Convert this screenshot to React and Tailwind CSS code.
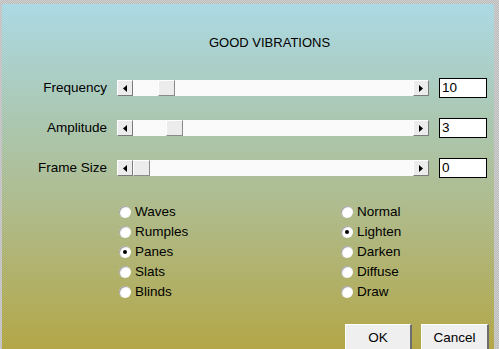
import React from "react";

const F = { fontFamily: '"Liberation Sans", Arial, sans-serif' };

function Arrow({ dir }) {
  return (
    <div className="w-[16px] h-[16px] shrink-0 bg-[#ececec] border-t border-l border-t-white border-l-white border-r border-b border-r-[#7a7a7a] border-b-[#7a7a7a] flex items-center justify-center">
      <svg width="4" height="7" viewBox="0 0 4 7">
        {dir === "left" ? (
          <polygon points="4,0 4,7 0,3.5" fill="#000" />
        ) : (
          <polygon points="0,0 0,7 4,3.5" fill="#000" />
        )}
      </svg>
    </div>
  );
}

function Scroll({ offset }) {
  return (
    <div className="flex w-[312px] h-[16px]">
      <Arrow dir="left" />
      <div className="flex-1 h-[16px] bg-[#fafafa] flex">
        <div
          className="h-[16px] w-[17px] bg-[#ececec] border-t border-l border-t-white border-l-white border-r border-b border-r-[#8a8a8a] border-b-[#8a8a8a]"
          style={{ marginLeft: offset }}
        />
      </div>
      <Arrow dir="right" />
    </div>
  );
}

function Row({ label, offset, value }) {
  return (
    <div className="flex items-center h-[20px]">
      <div className="w-[105px] text-right text-[13.5px] leading-[20px] text-black">{label}</div>
      <div className="ml-[10px]">
        <Scroll offset={offset} />
      </div>
      <div className="ml-[10px] w-[48px] h-[20px] bg-white border border-black text-[13.5px] leading-[18px] pl-[2px] text-black">
        {value}
      </div>
    </div>
  );
}

function Radio({ label, checked }) {
  return (
    <div className="flex items-center h-[20px]">
      <div className="w-[12px] h-[12px] rounded-full bg-white shadow-[inset_1px_1px_1px_#9a9a9a] flex items-center justify-center">
        {checked && <div className="w-[4px] h-[4px] rounded-full bg-black" />}
      </div>
      <span className="ml-[4px] text-[13.5px] leading-[20px] text-black">{label}</span>
    </div>
  );
}

function Btn({ children }) {
  return (
    <div className="h-[27px] bg-[#efefef] border-t border-l border-t-white border-l-white border-r-2 border-b-2 border-r-[#6e6e6e] border-b-[#6e6e6e] flex items-center justify-center text-[13.5px] leading-[15px] text-black">
      {children}
    </div>
  );
}

export default function App() {
  return (
    <div
      className="w-[499px] h-[349px] overflow-hidden bg-[repeating-conic-gradient(#b9b9b9_0%_25%,#d2d2d2_0%_50%)] bg-[length:2px_2px] pt-[4px] pl-[2px] pr-[5px]"
      style={F}
    >
      <div className="h-[345px] bg-[linear-gradient(to_bottom,#acd9e4_0%,#abc8b3_32%,#afbc8e_58%,#b3a748_100%)] flex flex-col">
        <div className="mt-[31px] pl-[207px] text-[13px] leading-[15px] text-black">GOOD VIBRATIONS</div>
        <div className="mt-[28px] flex flex-col gap-[20px]">
          <Row label="Frequency" offset={25} value="10" />
          <Row label="Amplitude" offset={33} value="3" />
          <Row label="Frame Size" offset={0} value="0" />
        </div>
        <div className="mt-[24px] flex">
          <div className="ml-[117px] w-[222px] flex flex-col">
            <Radio label="Waves" />
            <Radio label="Rumples" />
            <Radio label="Panes" checked />
            <Radio label="Slats" />
            <Radio label="Blinds" />
          </div>
          <div className="flex flex-col">
            <Radio label="Normal" />
            <Radio label="Lighten" checked />
            <Radio label="Darken" />
            <Radio label="Diffuse" />
            <Radio label="Draw" />
          </div>
        </div>
        <div className="mt-[22px] flex ml-[343px] gap-[9px]">
          <div className="w-[67px]"><Btn>OK</Btn></div>
          <div className="w-[68px]"><Btn>Cancel</Btn></div>
        </div>
      </div>
    </div>
  );
}
